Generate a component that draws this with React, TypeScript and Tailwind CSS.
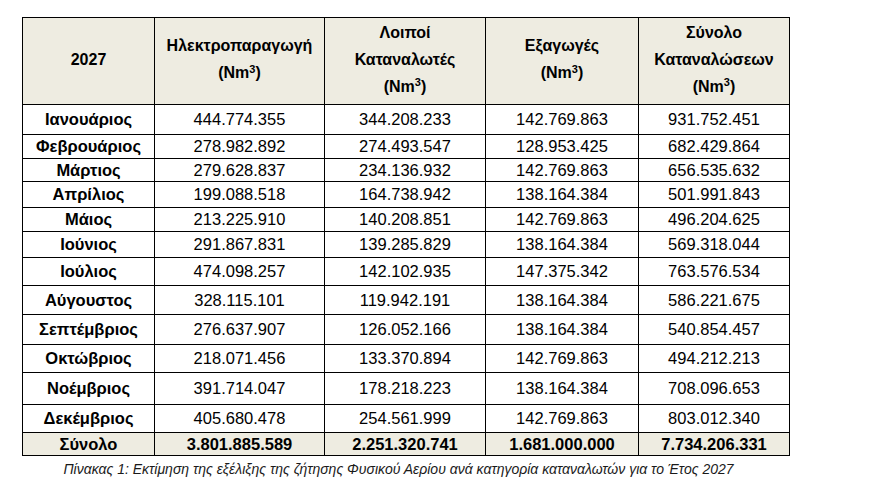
import React from "react";

type Row = { month: string; values: string[]; h: string };

const rows: Row[] = [
  { month: "Ιανουάριος", values: ["444.774.355", "344.208.233", "142.769.863", "931.752.451"], h: "h-[30px]" },
  { month: "Φεβρουάριος", values: ["278.982.892", "274.493.547", "128.953.425", "682.429.864"], h: "h-[24px]" },
  { month: "Μάρτιος", values: ["279.628.837", "234.136.932", "142.769.863", "656.535.632"], h: "h-[23px]" },
  { month: "Απρίλιος", values: ["199.088.518", "164.738.942", "138.164.384", "501.991.843"], h: "h-[26px]" },
  { month: "Μάιος", values: ["213.225.910", "140.208.851", "142.769.863", "496.204.625"], h: "h-[24px]" },
  { month: "Ιούνιος", values: ["291.867.831", "139.285.829", "138.164.384", "569.318.044"], h: "h-[26px]" },
  { month: "Ιούλιος", values: ["474.098.257", "142.102.935", "147.375.342", "763.576.534"], h: "h-[28px]" },
  { month: "Αύγουστος", values: ["328.115.101", "119.942.191", "138.164.384", "586.221.675"], h: "h-[29px]" },
  { month: "Σεπτέμβριος", values: ["276.637.907", "126.052.166", "138.164.384", "540.854.457"], h: "h-[30px]" },
  { month: "Οκτώβριος", values: ["218.071.456", "133.370.894", "142.769.863", "494.212.213"], h: "h-[28px]" },
  { month: "Νοέμβριος", values: ["391.714.047", "178.218.223", "138.164.384", "708.096.653"], h: "h-[32px]" },
  { month: "Δεκέμβριος", values: ["405.680.478", "254.561.999", "142.769.863", "803.012.340"], h: "h-[28px]" },
];

const totals = ["3.801.885.589", "2.251.320.741", "1.681.000.000", "7.734.206.331"];

function Unit() {
  return (
    <span>
      (Nm<sup className="text-[11px]">3</sup>)
    </span>
  );
}

export default function App() {
  return (
    <div
      className="w-[870px] h-[490px] bg-white text-black pt-[17px] pl-[22px]"
      style={{ fontFamily: '"Liberation Sans", Arial, sans-serif' }}
    >
      <table className="table-fixed border-collapse w-[767px]">
        <colgroup>
          <col className="w-[132px]" />
          <col className="w-[170px]" />
          <col className="w-[161px]" />
          <col className="w-[153px]" />
          <col className="w-[151px]" />
        </colgroup>
        <thead className="text-[16px] leading-[27px]">
          <tr className="h-[87px] bg-[#eeece1]">
            <th className="border border-black font-bold p-0 pb-[4px]">2027</th>
            <th className="border border-black font-bold p-0 pb-[4px]">
              Ηλεκτροπαραγωγή
              <br />
              <Unit />
            </th>
            <th className="border border-black font-bold p-0 pb-[4px]">
              Λοιποί
              <br />
              Καταναλωτές
              <br />
              <Unit />
            </th>
            <th className="border border-black font-bold p-0 pb-[4px]">
              Εξαγωγές
              <br />
              <Unit />
            </th>
            <th className="border border-black font-bold p-0 pb-[4px]">
              Σύνολο
              <br />
              Καταναλώσεων
              <br />
              <Unit />
            </th>
          </tr>
        </thead>
        <tbody className="text-[16.5px] leading-[19px]">
          {rows.map((r) => (
            <tr key={r.month} className={r.h}>
              <td className="border border-black text-center font-bold p-0">{r.month}</td>
              {r.values.map((v, i) => (
                <td key={i} className="border border-black text-center p-0">
                  {v}
                </td>
              ))}
            </tr>
          ))}
          <tr className="h-[23px] bg-[#eeece1] font-bold">
            <td className="border border-black text-center p-0">Σύνολο</td>
            {totals.map((v, i) => (
              <td key={i} className="border border-black text-center p-0">
                {v}
              </td>
            ))}
          </tr>
        </tbody>
      </table>
      <p className="w-[767px] text-center italic text-[14px] leading-[18px] text-[#1a1a1a] mt-[4px] pr-[14px]">
        Πίνακας 1: Εκτίμηση της εξέλιξης της ζήτησης Φυσικού Αερίου ανά κατηγορία καταναλωτών για το Έτος 2027
      </p>
    </div>
  );
}
